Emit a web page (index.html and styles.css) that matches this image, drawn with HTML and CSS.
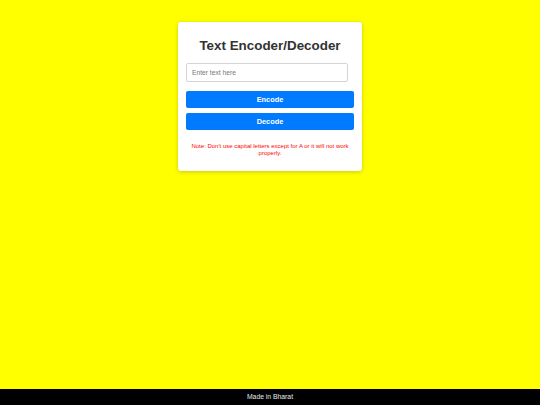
FILE: index.html
```html
<!DOCTYPE html>
<html lang="en">
<head>
<meta charset="utf-8">
<title>Text Encoder/Decoder</title>
<link rel="stylesheet" href="styles.css">
</head>
<body>
<main class="page">
  <div class="card">
    <h1 class="title">Text Encoder/Decoder</h1>
    <input class="text-input" type="text" placeholder="Enter text here">
    <button class="btn">Encode</button>
    <button class="btn btn-second">Decode</button>
    <p class="note">Note: Don't use capital letters except for A or it will not work properly.</p>
  </div>
</main>
<footer class="footer">Made in Bharat</footer>
</body>
</html>
```
FILE: styles.css
```css
html, body {
  margin: 0;
  padding: 0;
}
body {
  background: #ffff00;
  font-family: "Liberation Sans", Arial, sans-serif;
  min-height: 100vh;
  display: flex;
  flex-direction: column;
}
.page {
  flex: 1;
  display: flex;
  justify-content: center;
  align-items: flex-start;
}
.card {
  margin-top: 22px;
  width: 168px;
  padding: 8px 8px 14px 8px;
  background: #fff;
  border-radius: 3px;
  box-shadow: 0 1px 4px rgba(0, 0, 0, 0.2);
  display: flex;
  flex-direction: column;
  align-items: stretch;
}
.title {
  margin: 8px 0 0 0;
  font-size: 13.4px;
  line-height: 16px;
  font-weight: bold;
  color: #333;
  text-align: center;
}
.text-input {
  margin: 9px 0 0 0;
  width: 162px;
  height: 19px;
  box-sizing: border-box;
  border: 1px solid #d4d4d4;
  border-radius: 2px;
  padding: 0 5px;
  font-family: "Liberation Sans", Arial, sans-serif;
  font-size: 6.7px;
  color: #333;
  outline: none;
}
.text-input::placeholder {
  color: #777;
}
.btn {
  margin: 9px 0 0 0;
  height: 17px;
  border: none;
  border-radius: 2px;
  background: #007bff;
  color: #fff;
  font-family: "Liberation Sans", Arial, sans-serif;
  font-size: 7.4px;
  font-weight: bold;
  padding: 0;
}
.btn-second {
  margin-top: 5px;
}
.note {
  margin: 13px 0 0 0;
  font-size: 6px;
  line-height: 7px;
  color: #ff0000;
  text-align: center;
}
.footer {
  height: 16px;
  background: #000;
  color: #e8e8e8;
  font-size: 6.8px;
  line-height: 16px;
  text-align: center;
}
```
